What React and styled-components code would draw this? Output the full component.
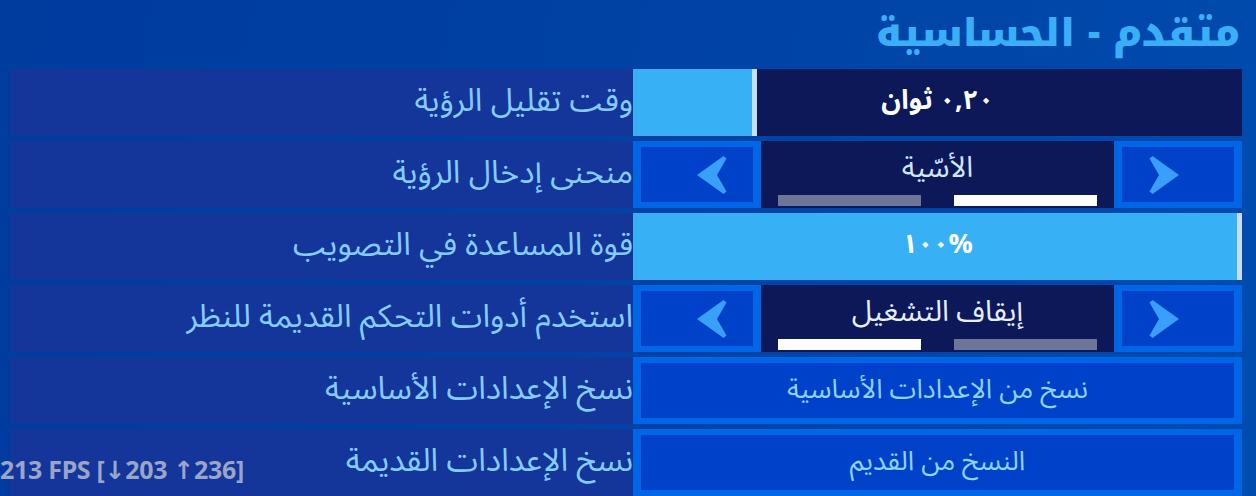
import React from "react";
import styled, { createGlobalStyle } from "styled-components";

const Global = createGlobalStyle`
  html, body { margin: 0; padding: 0; }
  body {
    width: 1256px;
    height: 496px;
    overflow: hidden;
    font-family: "Noto Sans Arabic", "Noto Sans", "DejaVu Sans", sans-serif;
  }
`;

const Page = styled.div`
  position: relative;
  width: 1256px;
  height: 496px;
  overflow: hidden;
  background: linear-gradient(100deg, #003b9e 0%, #0041a4 45%, #0047aa 80%, #004cae 100%);
  display: flex;
  flex-direction: column;
`;

const Header = styled.div`
  height: 69px;
  display: flex;
  justify-content: flex-end;
  align-items: center;
  padding-right: 16px;
  box-sizing: border-box;
`;

const Title = styled.h1`
  margin: 0;
  direction: rtl;
  font-family: "Noto Kufi Arabic", "Noto Sans Arabic", "DejaVu Sans", sans-serif;
  font-weight: 900;
  font-size: 38px;
  line-height: 1.5;
  padding-bottom: 2px;
  color: #3aaef6;
  white-space: nowrap;
`;

const List = styled.div`
  display: flex;
  flex-direction: column;
  gap: 5px;
  padding: 0 14px 0 10px;
`;

const Row = styled.div`
  display: flex;
  height: 67px;
  flex-shrink: 0;
`;

const Label = styled.div`
  width: 623px;
  background: #14359a;
  color: #84ccff;
  font-size: 32px;
  direction: rtl;
  text-align: right;
  display: flex;
  align-items: center;
  padding-bottom: 4px;
  box-sizing: border-box;
  white-space: nowrap;
`;

const Control = styled.div`
  width: 609px;
  position: relative;
  display: flex;
`;

const SliderTrack = styled.div`
  position: relative;
  flex: 1;
  background: #0c1858;
  display: flex;
  align-items: center;
  justify-content: center;
`;

const SliderFill = styled.div`
  position: absolute;
  left: 0;
  top: 0;
  bottom: 0;
  background: #38b0f5;
  border-right: 5px solid #cbdcef;
`;

const SliderValue = styled.span`
  position: relative;
  direction: ${(p) => p.$dir};
  unicode-bidi: isolate;
  color: #ffffff;
  font-weight: 700;
  font-size: 27px;
  line-height: 1.3;
  padding-bottom: 4px;
`;

const ArrowButton = styled.div`
  width: 128px;
  box-sizing: border-box;
  border-style: solid;
  border-color: #0066e8;
  border-width: 6px 8px;
  background: #0041c9;
  display: flex;
  align-items: center;
  justify-content: ${(p) => (p.$side === "left" ? "flex-start" : "flex-end")};
  padding: ${(p) => (p.$side === "left" ? "0 0 0 56px" : "0 55px 0 0")};
`;

const Middle = styled.div`
  flex: 1;
  height: 67px;
  box-sizing: border-box;
  background: #0c1858;
  display: flex;
  flex-direction: column;
  align-items: center;
  padding: 0 17px 2px;
`;

const OptionText = styled.div`
  flex: 1;
  min-height: 0;
  direction: rtl;
  display: flex;
  align-items: center;
  color: ${(p) => p.$color};
  font-size: 29px;
  line-height: 1.2;
  padding-top: 1px;
`;

const Bars = styled.div`
  display: flex;
  gap: 33px;
  width: 100%;
  flex-shrink: 0;
`;

const Bar = styled.div`
  flex: 1;
  height: 11px;
  background: ${(p) => (p.$on ? "#ffffff" : "#6e7698")};
`;

const ActionButton = styled.div`
  flex: 1;
  box-sizing: border-box;
  border-style: solid;
  border-color: #0066e8;
  border-width: 6px 8px;
  background: #0041c9;
  color: #8fd2ff;
  font-size: 27px;
  direction: rtl;
  display: flex;
  align-items: center;
  justify-content: center;
  padding-bottom: 3px;
`;

const Fps = styled.div`
  position: absolute;
  left: 0;
  top: 452px;
  font-family: "Noto Sans", "DejaVu Sans", sans-serif;
  font-weight: 700;
  font-size: 25px;
  color: #9aa5c9;
  white-space: nowrap;
  letter-spacing: -0.3px;
`;

const Chevron = ({ dir }) => (
  <svg width="30" height="38" viewBox="0 0 30 38" style={dir === "left" ? { transform: "scaleX(-1)" } : undefined}>
    <path d="M0.5 2.5 L3.5 0 L30 19 L3.5 38 L0.5 35.5 L10 19 Z" fill="#389ffb" />
  </svg>
);

const Slider = ({ value, pct, dir = "rtl" }) => (
  <SliderTrack>
    <SliderFill style={{ width: `${pct * 604}px` }} />
    <SliderValue $dir={dir}>{value}</SliderValue>
  </SliderTrack>
);

const Selector = ({ value, color, selected }) => (
  <>
    <ArrowButton $side="left">
      <Chevron dir="left" />
    </ArrowButton>
    <Middle>
      <OptionText $color={color}>{value}</OptionText>
      <Bars>
        <Bar $on={selected === 0} />
        <Bar $on={selected === 1} />
      </Bars>
    </Middle>
    <ArrowButton $side="right">
      <Chevron dir="right" />
    </ArrowButton>
  </>
);

export default function App() {
  return (
    <>
      <Global />
      <Page>
        <Header>
          <Title>متقدم - الحساسية</Title>
        </Header>
        <List>
          <Row>
            <Label>وقت تقليل الرؤية</Label>
            <Control>
              <Slider value="٠,٢٠ ثوان" pct={0.197} />
            </Control>
          </Row>
          <Row>
            <Label>منحنى إدخال الرؤية</Label>
            <Control>
              <Selector value="الأسّية" color="#cfe6ff" selected={1} />
            </Control>
          </Row>
          <Row>
            <Label>قوة المساعدة في التصويب</Label>
            <Control>
              <Slider value="١٠٠%" pct={1} dir="ltr" />
            </Control>
          </Row>
          <Row>
            <Label>استخدم أدوات التحكم القديمة للنظر</Label>
            <Control>
              <Selector value="إيقاف التشغيل" color="#e6eeff" selected={0} />
            </Control>
          </Row>
          <Row>
            <Label>نسخ الإعدادات الأساسية</Label>
            <Control>
              <ActionButton>نسخ من الإعدادات الأساسية</ActionButton>
            </Control>
          </Row>
          <Row>
            <Label>نسخ الإعدادات القديمة</Label>
            <Control>
              <ActionButton>النسخ من القديم</ActionButton>
            </Control>
          </Row>
        </List>
        <Fps>213 FPS [↓203 ↑236]</Fps>
      </Page>
    </>
  );
}
